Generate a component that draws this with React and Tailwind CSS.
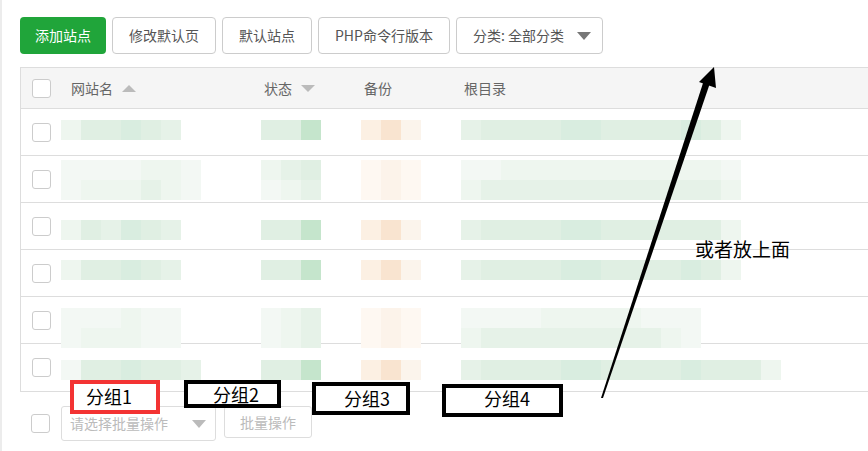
import React from 'react';

const G1 = 'bg-[#e0efe3]';
const G2 = 'bg-[#d9ede0]';
const G3 = 'bg-[#e6f2e8]';
const G4 = 'bg-[#eef6ef]';
const G5 = 'bg-[#f3f8f4]';
const GS = 'bg-[#c5e5cc]';
const O1 = 'bg-[#fcf0e3]';
const O2 = 'bg-[#f9e4d0]';
const O3 = 'bg-[#fbf4ec]';
const O4 = 'bg-[#fef8f2]';
const O5 = 'bg-[#fcf3ea]';

// blurred rows: top offset + block colours per column (each block 20px wide)
const rows = [
  {
    top: 'pt-[11px]',
    name: [[G4, G1, G1, G2, G1, G3]],
    status: [[G1, G1, GS]],
    backup: [[O1, O2, O3]],
    root: [[G3, G1, G1, G1, G1, G2, G2, G1, G1, G1, G1, G2, G1, G4]],
  },
  {
    top: 'pt-[4px]',
    name: [[G5, G5, G5, G5, G4, G4, G5], [G5, G4, G4, G4, G3, G4, G5]],
    status: [[G4, G3, G1], [G5, G4, G3]],
    backup: [[O4, O5, O4], [O4, O5, O4]],
    root: [[G5, G5, G4, G4, G4, G4, G4, G4, G4, G4, G4, G4, G4, G5], [G4, G3, G3, G3, G3, G3, G3, G3, G3, G3, G3, G3, G3, G4]],
  },
  {
    top: 'pt-[17px]',
    name: [[G4, G1, G3, G2, G1, G3]],
    status: [[G1, G1, GS]],
    backup: [[O1, O2, O3]],
    root: [[G3, G1, G1, G1, G1, G2, G2, G1, G1, G1, G1, G1, G1, G4]],
  },
  {
    top: 'pt-[10px]',
    name: [[G4, G1, G1, G2, G1, G3]],
    status: [[G1, G1, GS]],
    backup: [[O1, O2, O3]],
    root: [[G3, G1, G1, G1, G1, G2, G2, G1, G1, G1, G1, G2, G1, G4]],
  },
  {
    top: 'pt-[11px]',
    name: [[G5, G5, G5, G4, G5, G5], [G5, G4, G4, G4, G5, G5]],
    status: [[G5, G4, G3], [G5, G4, G3]],
    backup: [[O4, O5, O4], [O4, O5, O4]],
    root: [[G5, G5, G5, G5, G4, G4, G4, G4, G4, G5, G5, G5], [G4, G3, G3, G3, G3, G3, G3, G3, G3, G3, G4, G5]],
  },
  {
    top: 'pt-[16px]',
    name: [[G5, G1, G1, G2, G1, G1, G3]],
    status: [[G1, G1, GS]],
    backup: [[O1, O2, O3]],
    root: [[G3, G1, G1, G1, G1, G2, G2, G1, G1, G1, G1, G2, G1, G1, G1, G4]],
  },
];

function Blocks({ lines }) {
  return (
    <div className="flex flex-col">
      {lines.map((line, i) => (
        <div key={i} className="flex h-[20px]">
          {line.map((c, j) => (
            <div key={j} className={`w-[20px] h-full ${c}`} />
          ))}
        </div>
      ))}
    </div>
  );
}

function Checkbox() {
  return <div className="w-[19px] h-[19px] border border-[#cccccc] rounded-[3px] bg-white" />;
}

function Btn({ children, className = '' }) {
  return (
    <button className={`h-[37px] px-[16px] border border-[#cccccc] rounded-[4px] bg-white text-[14px] text-[#555] ${className}`}>
      {children}
    </button>
  );
}

const cjk = { fontFamily: '"Microsoft YaHei", "Noto Sans CJK SC", "Noto Sans", sans-serif' };

export default function App() {
  return (
    <div className="relative w-[868px] h-[451px] overflow-hidden bg-white border-l-2 border-[#ececec]" style={cjk}>
      <div className="pl-[18px] pt-[17px]">
        {/* toolbar */}
        <div className="flex gap-[6px]">
          <button className="h-[37px] px-[15px] rounded-[4px] bg-[#20a53a] text-white text-[14px]">添加站点</button>
          <Btn>修改默认页</Btn>
          <Btn>默认站点</Btn>
          <Btn>PHP命令行版本</Btn>
          <Btn className="flex items-center gap-[13px] pr-[11px]">
            分类: 全部分类
            <span className="w-0 h-0 border-l-[7px] border-r-[7px] border-t-[8px] border-l-transparent border-r-transparent border-t-[#777]" />
          </Btn>
        </div>

        {/* table */}
        <div className="mt-[13px] border-l border-b border-[#dddddd]">
          <div className="flex items-center h-[42px] bg-[#f5f5f5] border-t border-b border-[#dddddd] text-[14px] text-[#666]">
            <div className="w-[40px] pl-[11px]"><Checkbox /></div>
            <div className="w-[200px] pl-[10px] flex items-center gap-[9px]">
              网站名
              <span className="w-0 h-0 border-l-[7px] border-r-[7px] border-b-[7px] border-l-transparent border-r-transparent border-b-[#bbbbbb]" />
            </div>
            <div className="w-[100px] pl-[3px] flex items-center gap-[9px]">
              状态
              <span className="w-0 h-0 border-l-[7px] border-r-[7px] border-t-[7px] border-l-transparent border-r-transparent border-t-[#bbbbbb]" />
            </div>
            <div className="w-[100px] pl-[3px]">备份</div>
            <div className="pl-[3px]">根目录</div>
          </div>
          {rows.map((r, i) => (
            <div key={i} className={`flex h-[47px] ${i < rows.length - 1 ? 'border-b border-[#dddddd]' : ''}`}>
              <div className="w-[40px] pl-[11px] flex items-center"><Checkbox /></div>
              <div className={`w-[200px] ${r.top}`}><Blocks lines={r.name} /></div>
              <div className={`w-[100px] ${r.top}`}><Blocks lines={r.status} /></div>
              <div className={`w-[100px] ${r.top}`}><Blocks lines={r.backup} /></div>
              <div className={`${r.top}`}><Blocks lines={r.root} /></div>
            </div>
          ))}
        </div>

        {/* batch bar */}
        <div className="flex items-center mt-[14px] gap-[11px] pl-[11px]">
          <Checkbox />
          <div className="flex gap-[8px]">
            <div className="w-[155px] h-[35px] border border-[#dddddd] rounded-[3px] flex items-center justify-between pl-[8px] pr-[9px] text-[14px] text-[#bbbbbb]">
              请选择批量操作
              <span className="w-0 h-0 border-l-[7px] border-r-[7px] border-t-[8px] border-l-transparent border-r-transparent border-t-[#bbbbbb]" />
            </div>
            <div className="h-[32px] px-[15px] border border-[#dddddd] rounded-[3px] flex items-center text-[14px] text-[#bbbbbb]">批量操作</div>
          </div>
        </div>
      </div>

      {/* annotations */}
      <div className="absolute left-[68px] top-[380px] w-[90px] h-[34px] border-[4px] border-[#f33333] bg-white pl-[12px] text-[18px] leading-[24px] text-black">分组1</div>
      <div className="absolute left-[182px] top-[380px] w-[97px] h-[28px] border-[4px] border-black bg-white pl-[25px] text-[18px] leading-[20px] text-black">分组2</div>
      <div className="absolute left-[310px] top-[382px] w-[98px] h-[33px] border-[4px] border-black bg-white pl-[28px] text-[18px] leading-[24px] text-black">分组3</div>
      <div className="absolute left-[440px] top-[384px] w-[121px] h-[33px] border-[4px] border-black bg-white pl-[38px] text-[18px] leading-[20px] text-black">分组4</div>
      <div className="absolute left-[693px] top-[237px] text-[19px] leading-[24px] text-black">或者放上面</div>

      <svg className="absolute left-0 top-0 pointer-events-none" width="868" height="451">
        <polygon points="599,398 601,398 708,83 702,80" fill="#000" />
        <polygon points="712,67 697,82 714,88" fill="#000" />
      </svg>
    </div>
  );
}
